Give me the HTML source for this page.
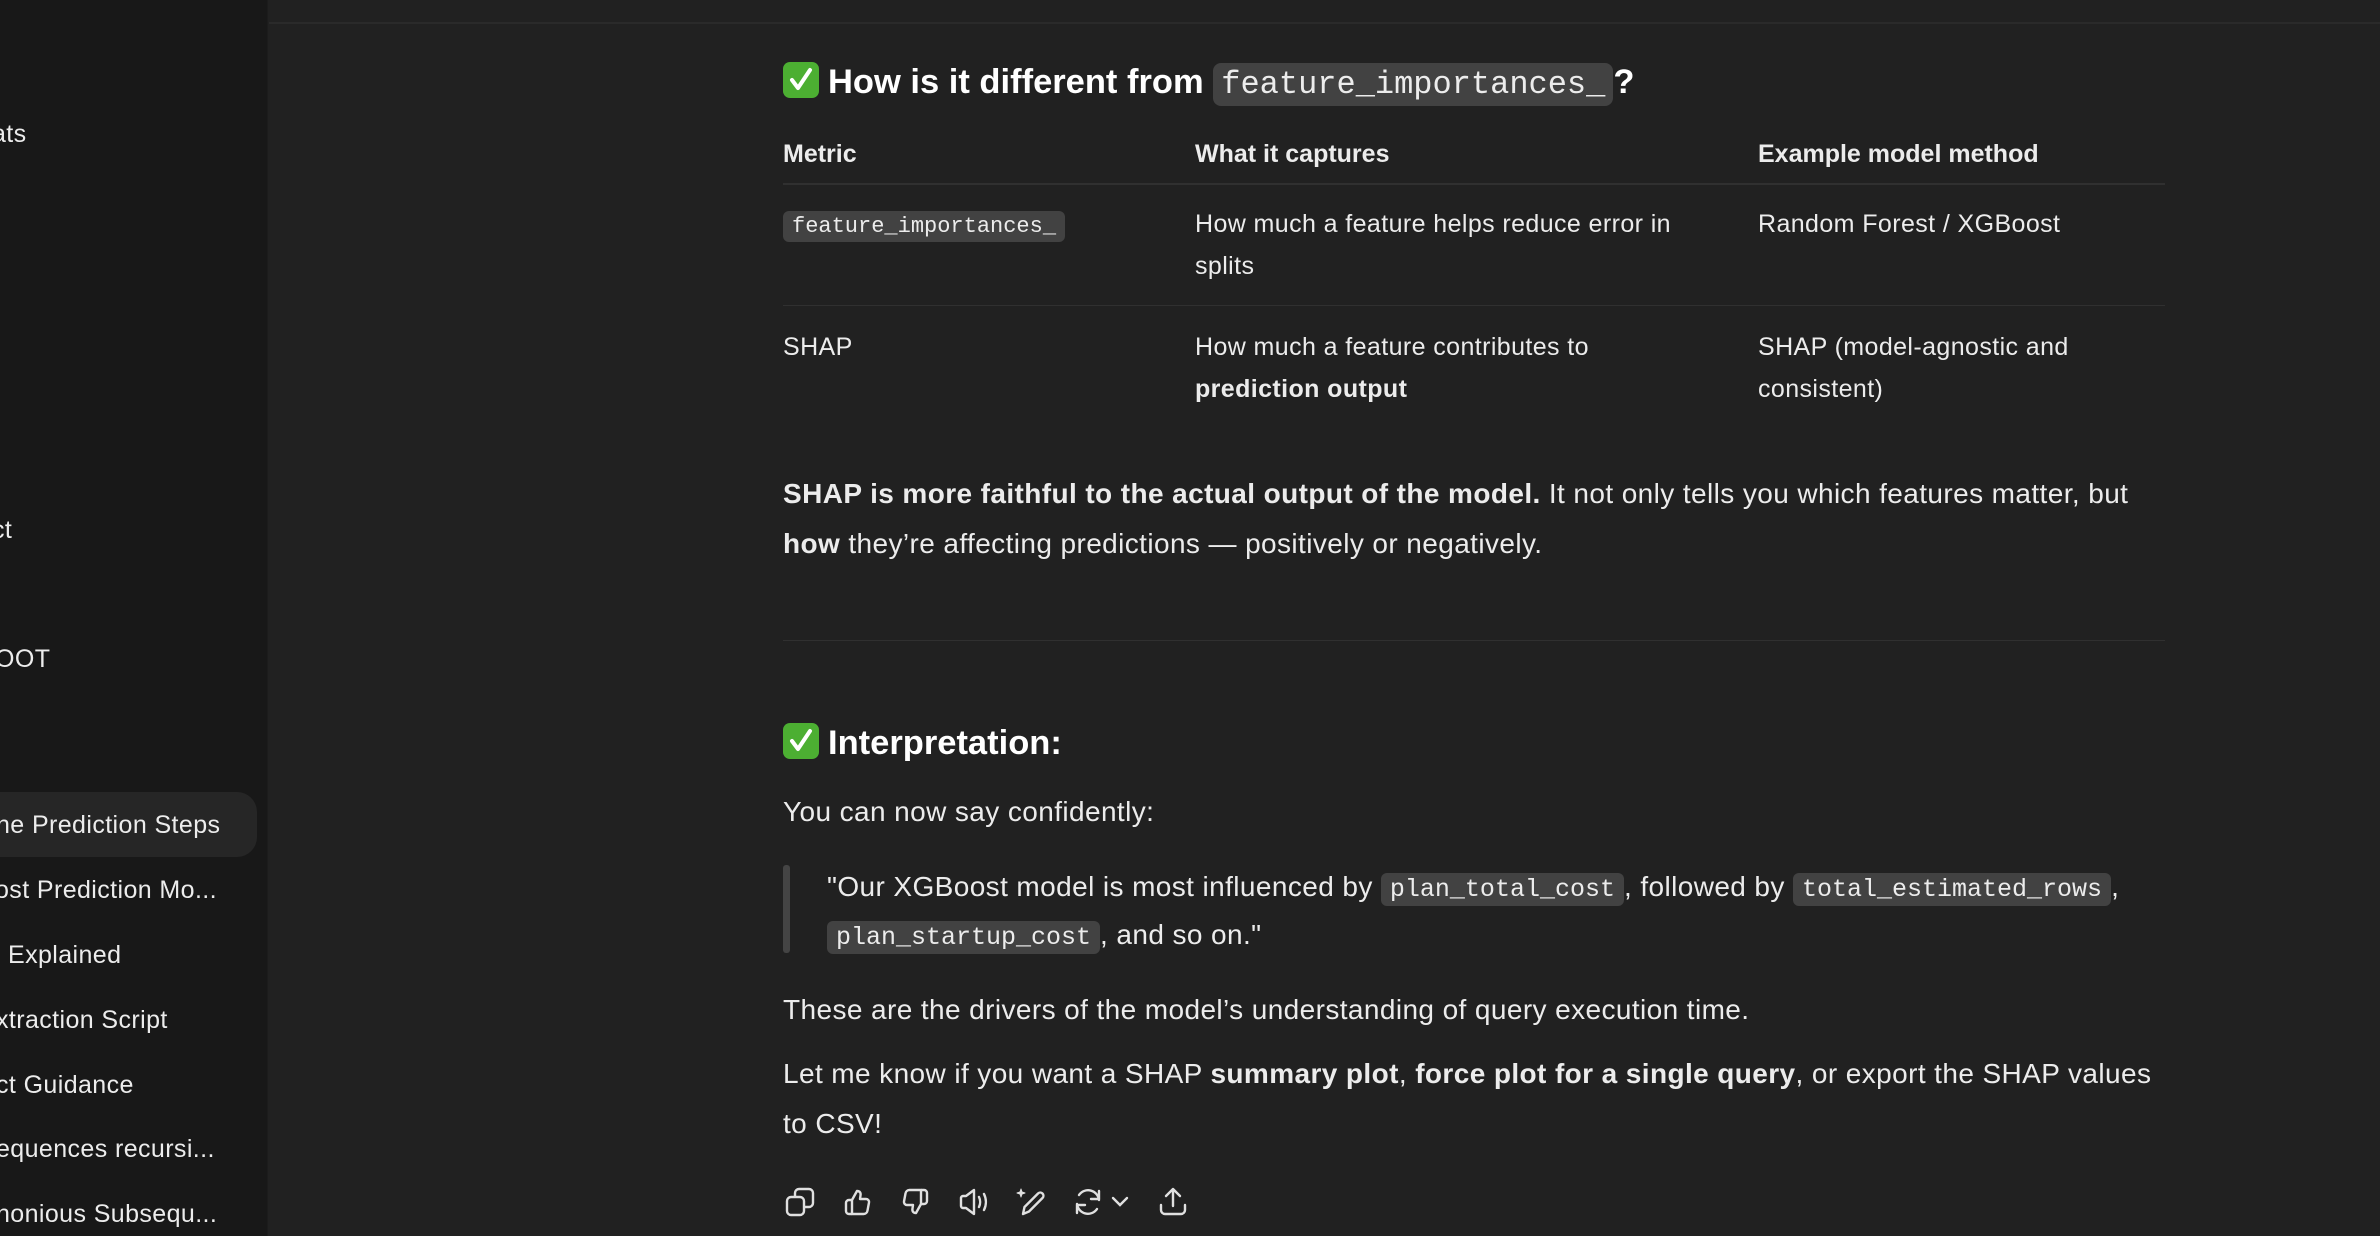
<!DOCTYPE html>
<html><head><meta charset="utf-8"><style>
*{margin:0;padding:0;box-sizing:border-box}
body{width:2380px;height:1236px;background:#212121;overflow:hidden;font-family:"Liberation Sans",sans-serif;color:#ececec;position:relative}
.sb{position:absolute;left:0;top:0;width:268px;height:1236px;background:#181818;border-right:1px solid #1c1c1c}
.topline{position:absolute;left:269px;right:0;top:22px;height:2px;background:#2a2a2a}
.si{position:absolute;left:0;font-size:25px;letter-spacing:0.4px;line-height:40px;color:#ececec;white-space:nowrap}
.hl{position:absolute;left:-20px;top:792px;width:277px;height:65px;background:#262626;border-radius:20px}
.a{position:absolute;white-space:nowrap}
.h{font-weight:bold;font-size:34.5px;line-height:50px;color:#fff}
.chk{display:inline-block;width:36px;height:36px;background:#4caf32;border-radius:7px;vertical-align:-5px;margin-right:9px;position:relative}
.chk svg{position:absolute;left:5px;top:5px}
code{font-family:"Liberation Mono",monospace;background:#424242;border-radius:6px;padding:2px 9px;color:#ececec;letter-spacing:0}
.hc{font-weight:normal;font-size:32px;padding:3px 8px;border-radius:8px}
.th{font-size:25px;font-weight:bold;line-height:42px}
.td{font-size:25px;letter-spacing:0.4px;line-height:42px}
.p{font-size:28px;letter-spacing:0.4px;line-height:50px}
.line{position:absolute;height:2px;background:#303030}
.icons svg{position:absolute;top:1186px}
</style></head><body>
<div class="sb">
<div class="hl"></div>
<div class="si" style="top:114px;left:-8px">ats</div>
<div class="si" style="top:510px;left:-8px">ct</div>
<div class="si" style="top:639px;left:-5px">OOT</div>
<div class="si" style="top:805px;left:-4px">ne Prediction Steps</div>
<div class="si" style="top:870px;left:-5px">ost Prediction Mo...</div>
<div class="si" style="top:935px;left:8px">Explained</div>
<div class="si" style="top:1000px;left:-4px">xtraction Script</div>
<div class="si" style="top:1065px;left:-4px">ct Guidance</div>
<div class="si" style="top:1129px;left:-4px">equences recursi...</div>
<div class="si" style="top:1194px;left:-4px">nonious Subsequ...</div>
</div>
<div class="topline"></div>

<div class="a h" style="left:783px;top:57px"><span class="chk"><svg width="26" height="26" viewBox="0 0 26 26"><path d="M4 13 L10 21 L22 3" stroke="#fff" stroke-width="4" fill="none" stroke-linecap="round" stroke-linejoin="round"/></svg></span>How is it different from <code class="hc">feature_importances_</code>?</div>

<div class="a th" style="left:783px;top:133px">Metric</div>
<div class="a th" style="left:1195px;top:133px">What it captures</div>
<div class="a th" style="left:1758px;top:133px">Example model method</div>
<div class="line" style="left:783px;width:1382px;top:183px"></div>
<div class="a td" style="left:783px;top:203px"><code style="font-size:22px;padding:3px 9px">feature_importances_</code></div>
<div class="a td" style="left:1195px;top:203px">How much a feature helps reduce error in<br>splits</div>
<div class="a td" style="left:1758px;top:203px">Random Forest / XGBoost</div>
<div class="line" style="left:783px;width:1382px;top:305px;height:1px"></div>
<div class="a td" style="left:783px;top:326px">SHAP</div>
<div class="a td" style="left:1195px;top:326px">How much a feature contributes to<br><b>prediction output</b></div>
<div class="a td" style="left:1758px;top:326px">SHAP (model-agnostic and<br>consistent)</div>

<div class="a p" style="left:783px;top:469px"><b>SHAP is more faithful to the actual output of the model.</b> It not only tells you which features matter, but<br><b>how</b> they’re affecting predictions — positively or negatively.</div>

<div class="line" style="left:783px;width:1382px;top:640px;height:1px"></div>

<div class="a h" style="left:783px;top:718px"><span class="chk"><svg width="26" height="26" viewBox="0 0 26 26"><path d="M4 13 L10 21 L22 3" stroke="#fff" stroke-width="4" fill="none" stroke-linecap="round" stroke-linejoin="round"/></svg></span>Interpretation:</div>

<div class="a p" style="left:783px;top:787px">You can now say confidently:</div>
<div style="position:absolute;left:783px;top:865px;width:7px;height:88px;background:#444;border-radius:3px"></div>
<div class="a p" style="left:827px;top:864px;line-height:45px">"Our XGBoost model is most influenced by <code style="font-size:25px">plan_total_cost</code>, followed by <code style="font-size:25px">total_estimated_rows</code>,<br><code style="font-size:25px">plan_startup_cost</code>, and so on."</div>
<div class="a p" style="left:783px;top:985px">These are the drivers of the model’s understanding of query execution time.</div>
<div class="a p" style="left:783px;top:1049px">Let me know if you want a SHAP <b>summary plot</b>, <b>force plot for a single query</b>, or export the SHAP values<br>to CSV!</div>

<div class="icons" style="color:#ddd">
<svg style="left:784px" width="32" height="32" viewBox="0 0 32 32" fill="none" stroke="#e0e0e0" stroke-width="2.4" stroke-linejoin="round"><rect x="3" y="11" width="17" height="18" rx="4"/><path d="M11 11V7a4 4 0 0 1 4-4h10a4 4 0 0 1 4 4v10a4 4 0 0 1-4 4h-5"/></svg>
<svg style="left:842px" width="32" height="32" viewBox="0 0 32 32" fill="none" stroke="#e0e0e0" stroke-width="2.4" stroke-linejoin="round"><path d="M10 14l5-9c3 0 4 2 3.5 4.5L18 13h6a3 3 0 0 1 3 3.5l-1.5 8A4 4 0 0 1 21.5 28H10z"/><path d="M10 14H7a3 3 0 0 0-3 3v8a3 3 0 0 0 3 3h3"/></svg>
<svg style="left:899px" width="32" height="32" viewBox="0 0 32 32" fill="none" stroke="#e0e0e0" stroke-width="2.4" stroke-linejoin="round"><path d="M22 18l-5 9c-3 0-4-2-3.5-4.5L14 19H8a3 3 0 0 1-3-3.5l1.5-8A4 4 0 0 1 10.5 4H22z"/><path d="M22 18h3a3 3 0 0 0 3-3V7a3 3 0 0 0-3-3h-3"/></svg>
<svg style="left:957px" width="34" height="32" viewBox="0 0 34 32" fill="none" stroke="#e0e0e0" stroke-width="2.4" stroke-linejoin="round" stroke-linecap="round"><path d="M4 12a2 2 0 0 1 2-2h3l8-6v24l-8-6H6a2 2 0 0 1-2-2z"/><path d="M22 11c1.5 3 1.5 7 0 10M27 8c2.5 5 2.5 11 0 16"/></svg>
<svg style="left:1015px" width="32" height="32" viewBox="0 0 32 32" fill="none" stroke="#e0e0e0" stroke-width="2.4" stroke-linejoin="round" stroke-linecap="round"><path d="M8 28l1.5-7L23 7.5a3 3 0 0 1 4.5 4.5L14 25.5z"/><path d="M6 3l1 3 3 1-3 1-1 3-1-3-3-1 3-1z" fill="#e0e0e0" stroke-width="1"/></svg>
<svg style="left:1072px" width="32" height="32" viewBox="0 0 32 32" fill="none" stroke="#e0e0e0" stroke-width="2.4" stroke-linejoin="round" stroke-linecap="round"><path d="M27 14A11 11 0 0 0 7 9M5 18a11 11 0 0 0 20 5"/><path d="M27 5v8h-8M5 27v-8h8"/></svg>
<svg style="left:1110px;top:1193px" width="20" height="18" viewBox="0 0 20 18" fill="none" stroke="#e0e0e0" stroke-width="2.4" stroke-linecap="round"><path d="M3 5l7 7 7-7"/></svg>
<svg style="left:1157px" width="32" height="32" viewBox="0 0 32 32" fill="none" stroke="#e0e0e0" stroke-width="2.4" stroke-linejoin="round" stroke-linecap="round"><path d="M16 20V4M9 10l7-7 7 7"/><path d="M4 19v5a4 4 0 0 0 4 4h16a4 4 0 0 0 4-4v-5"/></svg>
</div>
</body></html>
